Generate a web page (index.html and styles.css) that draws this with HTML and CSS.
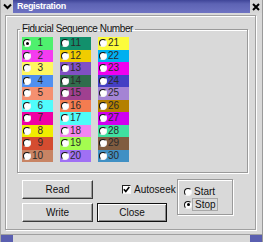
FILE: index.html
```html
<!DOCTYPE html>
<html>
<head>
<meta charset="utf-8">
<title>Registration</title>
<link rel="stylesheet" href="styles.css">
</head>
<body>
<div class="window">
  <div class="titlebar">
    <div class="tb-btn"><svg width="9" height="7" viewBox="0 0 9 7"><path d="M1 1.5 L4.5 5 L8 1.5" stroke="#000" stroke-width="2" fill="none"/></svg></div>
    <div class="tb-title">Registration</div>
    <div class="tb-btn"><svg width="8" height="8" viewBox="0 0 8 8"><path d="M1 1 L7 7 M7 1 L1 7" stroke="#000" stroke-width="2" fill="none"/></svg></div>
  </div>
  <div class="body">
    <div class="panel">
      <fieldset class="fid">
        <legend>Fiducial Sequence Number</legend>
        <div class="grid">
          <div class="cell c1"><span class="radio on"></span><span class="num">1</span></div>
          <div class="cell c2"><span class="radio"></span><span class="num">2</span></div>
          <div class="cell c3"><span class="radio"></span><span class="num">3</span></div>
          <div class="cell c4"><span class="radio"></span><span class="num">4</span></div>
          <div class="cell c5"><span class="radio"></span><span class="num">5</span></div>
          <div class="cell c6"><span class="radio"></span><span class="num">6</span></div>
          <div class="cell c7"><span class="radio"></span><span class="num">7</span></div>
          <div class="cell c8"><span class="radio"></span><span class="num">8</span></div>
          <div class="cell c9"><span class="radio"></span><span class="num">9</span></div>
          <div class="cell c10"><span class="radio"></span><span class="num">10</span></div>
          <div class="cell c11"><span class="radio"></span><span class="num">11</span></div>
          <div class="cell c12"><span class="radio"></span><span class="num">12</span></div>
          <div class="cell c13"><span class="radio"></span><span class="num">13</span></div>
          <div class="cell c14"><span class="radio"></span><span class="num">14</span></div>
          <div class="cell c15"><span class="radio"></span><span class="num">15</span></div>
          <div class="cell c16"><span class="radio"></span><span class="num">16</span></div>
          <div class="cell c17"><span class="radio"></span><span class="num">17</span></div>
          <div class="cell c18"><span class="radio"></span><span class="num">18</span></div>
          <div class="cell c19"><span class="radio"></span><span class="num">19</span></div>
          <div class="cell c20"><span class="radio"></span><span class="num">20</span></div>
          <div class="cell c21"><span class="radio"></span><span class="num">21</span></div>
          <div class="cell c22"><span class="radio"></span><span class="num">22</span></div>
          <div class="cell c23"><span class="radio"></span><span class="num">23</span></div>
          <div class="cell c24"><span class="radio"></span><span class="num">24</span></div>
          <div class="cell c25"><span class="radio"></span><span class="num">25</span></div>
          <div class="cell c26"><span class="radio"></span><span class="num">26</span></div>
          <div class="cell c27"><span class="radio"></span><span class="num">27</span></div>
          <div class="cell c28"><span class="radio"></span><span class="num">28</span></div>
          <div class="cell c29"><span class="radio"></span><span class="num">29</span></div>
          <div class="cell c30"><span class="radio"></span><span class="num">30</span></div>
        </div>
      </fieldset>
      <div class="controls">
        <button class="btn read">Read</button>
        <label class="check"><span class="cb"><svg width="7" height="7" viewBox="0 0 7 7"><path d="M0.8 3.2 L2.8 5.4 L6.3 1" stroke="#000" stroke-width="1.6" fill="none"/></svg></span>Autoseek</label>
        <fieldset class="ss">
          <div class="opt"><span class="radio"></span><span class="opt-text">Start</span></div>
          <div class="opt"><span class="radio on"></span><span class="opt-text focus">Stop</span></div>
        </fieldset>
        <button class="btn write">Write</button>
        <button class="btn close">Close</button>
      </div>
    </div>
  </div>
  <div class="bottom"><span class="corner"></span><span class="corner"></span></div>
</div>
</body>
</html>
```
FILE: styles.css
```css
* { box-sizing: border-box; }
html, body { margin: 0; padding: 0; }
body {
  background: #d9d9d9;
  font-family: "Liberation Sans", Arial, sans-serif;
  font-size: 10px;
  color: #111;
}
.window {
  width: 263px;
  height: 242px;
  display: flex;
  flex-direction: column;
  background: #d9d9d9;
  border-left: 1px solid #a8a8a8;
  border-right: 1px solid #9a9a9a;
  overflow: hidden;
}
.titlebar { height: 13px; display: flex; flex: none; }
.tb-btn {
  width: 12px;
  display: flex;
  align-items: center;
  justify-content: center;
  background: #d6d6d6;
}
.tb-title {
  flex: 1;
  background: linear-gradient(#3f4598, #5d63b4 30%, #6e73c2);
  color: #fff;
  font-weight: bold;
  font-size: 9px;
  line-height: 13px;
  padding-left: 4px;
  letter-spacing: -0.3px;
}
.body {
  flex: 1;
  padding: 2px 0 0 4px;
}
.panel {
  width: 251px;
  height: 215px;
  border: 1px solid #a0a0a0;
  box-shadow: inset 1px 1px 0 #fff, 1px 1px 0 #fff;
}
.fid {
  margin: 7px 7px 0 11px;
  padding: 2px 0 10px 4px;
  border: 1px solid #9a9a9a;
  box-shadow: inset 1px 1px 0 #fff, 1px 1px 0 #fff;
  min-width: 0;
}
.fid legend {
  padding: 0 2px;
  margin-left: -2px;
  font-size: 10px;
  line-height: 12px;
  letter-spacing: -0.4px;
  color: #111;
}
.grid {
  display: grid;
  grid-template-columns: repeat(3, 31px);
  grid-template-rows: repeat(10, 12.5px);
  grid-auto-flow: column;
  column-gap: 7px;
}
.cell {
  display: flex;
  align-items: center;
  padding-left: 1px;
  color: #2a2a2a;
}
.num {
  width: 12px;
  text-align: right;
  line-height: 10px;
}
.radio {
  width: 8px;
  height: 8px;
  flex: none;
  border-radius: 50%;
  background: #fff;
  border: 1px solid;
  border-color: #111 #f4f4f4 #f4f4f4 #111;
  position: relative;
}
.radio.on::after {
  content: "";
  position: absolute;
  left: 1.5px;
  top: 1.5px;
  width: 3px;
  height: 3px;
  border-radius: 50%;
  background: #000;
}
.c1 { background: #4ff06e; }
.c2 { background: #f43cf0; }
.c3 { background: #fff760; }
.c4 { background: #5090f0; }
.c5 { background: #f49070; }
.c6 { background: #50fcfc; }
.c7 { background: #f000a4; }
.c8 { background: #f0ec00; }
.c9 { background: #d44c30; }
.c10 { background: #c88464; }
.c11 { background: #12906c; }
.c12 { background: #f0cc00; }
.c13 { background: #8050c4; }
.c14 { background: #306c4c; }
.c15 { background: #a04090; }
.c16 { background: #f47c50; }
.c17 { background: #50fcf8; }
.c18 { background: #f484f0; }
.c19 { background: #a4fc50; }
.c20 { background: #a070f4; }
.c21 { background: #fcfc3c; }
.c22 { background: #00b0f0; }
.c23 { background: #f000f0; }
.c24 { background: #4440c4; }
.c25 { background: #a484d4; }
.c26 { background: #b48000; }
.c27 { background: #d000f0; }
.c28 { background: #40e0a0; }
.c29 { background: #805c40; }
.c30 { background: #4090c4; }

.controls {
  display: grid;
  grid-template-columns: 71px 4px 70px 10px 56px;
  grid-template-rows: 19px 19px;
  row-gap: 4px;
  margin: 7px 0 0 16px;
}
.btn {
  font-family: inherit;
  font-size: 10px;
  color: #111;
  background: #d9d9d9;
  padding: 0;
  margin: 0;
  border: 1px solid;
  border-color: #fff #3a3a3a #3a3a3a #fff;
  box-shadow: inset -1px -1px 0 #9a9a9a;
}
.read { grid-column: 1; grid-row: 1; }
.write { grid-column: 1; grid-row: 2; }
.close {
  grid-column: 3;
  grid-row: 2;
  border-color: #111;
  box-shadow: inset 1px 1px 0 #fff, inset -1px -1px 0 #8a8a8a;
}
.check {
  grid-column: 3;
  grid-row: 1;
  display: flex;
  align-items: center;
  padding-left: 25px;
  white-space: nowrap;
  font-size: 10px;
}
.cb {
  width: 9px;
  height: 9px;
  flex: none;
  background: #fff;
  border: 1px solid;
  border-color: #222 #f4f4f4 #f4f4f4 #222;
  display: flex;
  align-items: center;
  justify-content: center;
  margin-right: 3px;
}
.ss {
  grid-column: 5;
  grid-row: 1 / span 2;
  align-self: start;
  margin: -1px 0 0 0;
  height: 36px;
  padding: 5px 0 0 6px;
  border: 1px solid #9a9a9a;
  box-shadow: inset 1px 1px 0 #fff, 1px 1px 0 #fff;
  min-width: 0;
}
.opt {
  height: 13px;
  display: flex;
  align-items: center;
}
.opt-text { margin-left: 2px; line-height: 11px; }
.focus {
  margin-left: 0;
  padding: 0 1px 0 2px;
  border: 1px solid #a8a8a8;
}
.bottom {
  flex: none;
  height: 8px;
  border-top: 1px solid #a0a0a0;
  display: flex;
  justify-content: space-between;
  margin-top: 3px;
}
.corner {
  width: 12px;
  background: #5a5fb0;
}
```
